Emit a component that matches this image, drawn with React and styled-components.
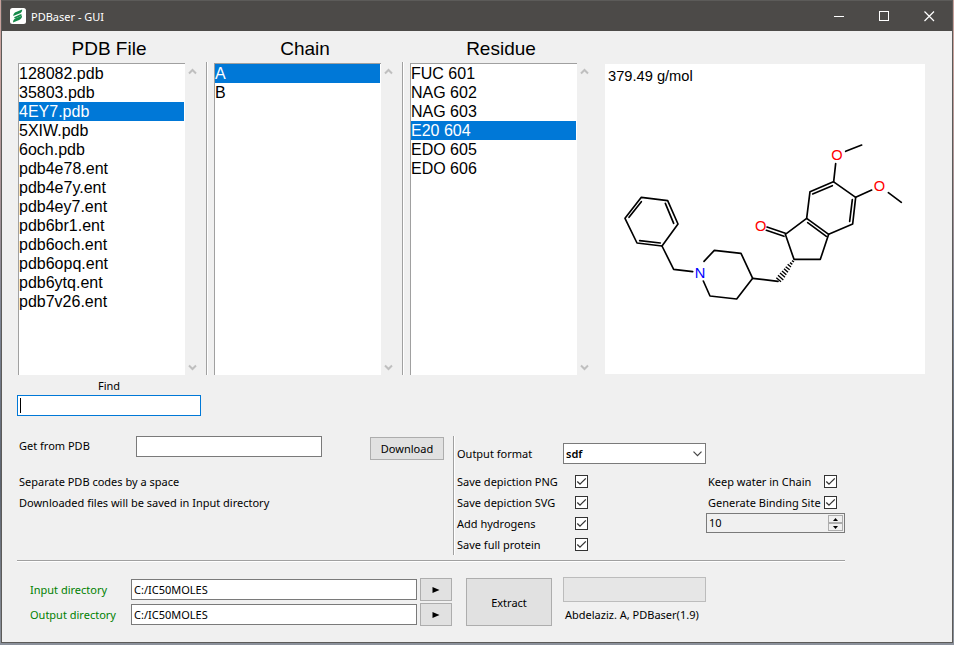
import React, { useState } from "react";
import styled, { createGlobalStyle, css } from "styled-components";

const GlobalStyle = createGlobalStyle`
  * { box-sizing: border-box; }
  body {
    margin: 0;
    color: #000;
    font: 11px/15px "Noto Sans", "Open Sans", sans-serif;
    background: linear-gradient(#c7a19c 0 8%, #a59296 30%, #7c8494 50%, #5d6470 75%, #8b919b);
  }
  button, input, select { font: inherit; color: inherit; margin: 0; border-radius: 0; }
  button { padding: 0; }
`;

const Desktop = styled.div`
  min-height: 100vh;
  padding: 0 1px 2px;
  display: flex;
`;

const Window = styled.main`
  flex: 1;
  min-width: 0;
  border: 1px solid #5c5b59;
  background: #f0f0f0;
`;

const TitleBar = styled.header`
  height: 30px;
  display: flex;
  align-items: center;
  background: #4c4a48;
  color: #fff;
  padding-left: 8px;
`;

const AppTitle = styled.h1`
  flex: 1;
  margin: 0 0 0 5px;
  font-size: 11px;
  font-weight: 400;
`;

const CaptionButton = styled.button`
  width: 45px;
  height: 30px;
  border: 0;
  background: none;
  display: grid;
  place-items: center;
`;

const Panes = styled.section`
  display: grid;
  grid-template-columns: 184fr 12px 184fr 12px 184fr 11px 320fr;
  grid-template-rows: 26px 313px;
  padding: 5px 27px 0 16px;
`;

const PaneTitle = styled.h2`
  grid-row: 1;
  grid-column: ${(p) => p.$col};
  margin: 0;
  padding-right: 2px;
  text-align: center;
  font: 19px/26px "Liberation Sans", Arial, sans-serif;
`;

const ListPane = styled.div`
  grid-row: 2;
  grid-column: ${(p) => p.$col};
  display: flex;
  padding-top: 1px;
`;

const ListBox = styled.ul`
  flex: 1;
  margin: 0;
  padding: 0 1px 0 0;
  list-style: none;
  background: #fff;
  border: solid #a0a0a0;
  border-width: 1px 0 0 1px;
  font: 16px/19px "Liberation Sans", Arial, sans-serif;
`;

const Option = styled.li`
  height: 19px;
  cursor: default;
  white-space: nowrap;
  ${(p) =>
    p.$selected &&
    css`
      background: #0078d7;
      color: #fff;
    `}
`;

const ScrollBar = styled.div`
  width: 17px;
  display: flex;
  flex-direction: column;
  justify-content: space-between;
`;

const ScrollButton = styled.button`
  height: 16px;
  padding-right: 2px;
  border: 0;
  background: none;
  display: grid;
  place-items: center;
`;

const PaneDivider = styled.div`
  grid-row: 2;
  grid-column: ${(p) => p.$col};
  width: 2px;
  margin-left: 4px;
  border-left: 1px solid #a0a0a0;
  background: #fff;
`;

const Depiction = styled.figure`
  grid-row: 2;
  grid-column: 7;
  margin: 2px 0 1px;
  background: #fff;
  svg { display: block; width: 100%; height: 100%; }
`;

const FindArea = styled.section`
  display: flex;
  flex-direction: column;
  width: 184px;
  margin: 3px 0 0 15px;
  label { text-align: center; line-height: 15px; margin-bottom: 2px; }
`;

const TextInput = styled.input`
  height: 21px;
  width: 100%;
  min-width: 0;
  padding: 0 2px;
  border: 1px solid #7a7a7a;
  background: #fff;
  outline: none;
`;

const FindInput = styled(TextInput)`
  border-color: #0078d7;
  caret-color: transparent;
  &:placeholder-shown:focus {
    background: linear-gradient(#000, #000) 2px 2px / 1px 15px no-repeat #fff;
  }
`;

const Lower = styled.section`
  margin: 20px 107px 0 15px;
  display: grid;
  grid-template-columns: 436fr 392fr;
  height: 119px;
`;

const Fetch = styled.div`
  padding: 0 9px 0 2px;
`;

const FetchRow = styled.div`
  display: grid;
  grid-template-columns: 117px 1fr 74px;
  align-items: start;
  height: 38px;
  label { line-height: 20px; }
  input { width: 186px; }
  button { margin-top: 1px; }
`;

const Hint = styled.p`
  margin: 0;
  line-height: 15px;
  padding-bottom: 6px;
`;

const Button = styled.button`
  height: ${(p) => p.$height || 23}px;
  margin-top: ${(p) => p.$top || 0}px;
  border: 1px solid #adadad;
  background: #e1e1e1;
  display: grid;
  place-items: center;
`;

const Options = styled.div`
  border-left: 1px solid #a0a0a0;
  box-shadow: inset 1px 0 #fff;
  padding: 7px 0 0 3px;
`;

const FormatRow = styled.div`
  display: grid;
  grid-template-columns: 106px 143px;
  align-items: center;
  margin-bottom: 7px;
`;

const SelectBox = styled.div`
  display: grid;
  align-items: center;
  > * { grid-area: 1 / 1; }
  svg { justify-self: end; margin-right: 4px; pointer-events: none; }
`;

const Select = styled.select`
  appearance: none;
  height: 21px;
  width: 100%;
  padding: 0 2px;
  border: 1px solid #7a7a7a;
  background: #fff;
  font-weight: 600;
  outline: none;
`;

const CheckColumns = styled.div`
  display: grid;
  grid-template-columns: 249px 139px;
`;

const CheckRow = styled.div`
  display: grid;
  grid-template-columns: ${(p) => p.$label}px 13px;
  align-items: center;
  height: 21px;
  padding-left: ${(p) => p.$indent || 0}px;
  white-space: nowrap;
`;

const CheckBoxFrame = styled.span`
  display: grid;
  width: 13px;
  height: 13px;
  > * { grid-area: 1 / 1; }
  svg { pointer-events: none; }
  input:not(:checked) + svg { visibility: hidden; }
`;

const CheckInput = styled.input`
  appearance: none;
  width: 13px;
  height: 13px;
  border: 1px solid #333;
  background: #fff;
`;

const SpinBox = styled.div`
  display: flex;
  height: 20px;
  border: 1px solid #7a7a7a;
  padding: 1px;
`;

const SpinInput = styled.input`
  flex: 1;
  min-width: 0;
  border: 0;
  padding: 0 1px 2px;
  background: none;
  outline: none;
`;

const SpinButtons = styled.div`
  width: 15px;
  display: grid;
  grid-template-rows: 8px 8px;
`;

const SpinButton = styled.button`
  border: 1px solid #adadad;
  background: #f0f0f0;
  display: grid;
  place-items: center;
`;

const Rule = styled.hr`
  margin: 5px 107px 0 15px;
  border: solid;
  border-width: 1px 0;
  border-color: #a0a0a0 transparent #fff;
`;

const Footer = styled.section`
  margin: 15px 107px 15px 28px;
  display: grid;
  grid-template-columns: 425px 86px 143px;
  column-gap: 11px;
  align-items: start;
`;

const Directories = styled.div`
  display: grid;
  gap: 2px;
  padding-top: 1px;
`;

const DirectoryRow = styled.div`
  display: grid;
  grid-template-columns: 98px 286px 32px;
  column-gap: 3px;
  align-items: center;
  label { color: #008000; }
`;

const Progress = styled.div`
  height: 25px;
  border: 1px solid #bcbcbc;
  background: #e6e6e6;
`;

const Credit = styled.p`
  margin: 5px 0 0 2px;
  white-space: nowrap;
`;

const files = [
  "128082.pdb", "35803.pdb", "4EY7.pdb", "5XIW.pdb", "6och.pdb", "pdb4e78.ent",
  "pdb4e7y.ent", "pdb4ey7.ent", "pdb6br1.ent", "pdb6och.ent", "pdb6opq.ent",
  "pdb6ytq.ent", "pdb7v26.ent",
];
const residues = ["FUC 601", "NAG 602", "NAG 603", "E20 604", "EDO 605", "EDO 606"];

function ScrollArrow({ down }) {
  return (
    <svg width="9" height="7" viewBox="0 0 9 7" fill="none" stroke="#bfbfbf" strokeWidth="2">
      <path d={down ? "M1 1.5 4.5 5 8 1.5" : "M1 5.5 4.5 2 8 5.5"} />
    </svg>
  );
}

function ListColumn({ title, items, initial, col }) {
  const [selected, setSelected] = useState(initial);
  return (
    <>
      <PaneTitle $col={col}>{title}</PaneTitle>
      <ListPane $col={col}>
        <ListBox role="listbox" aria-label={title}>
          {items.map((item) => (
            <Option
              key={item}
              role="option"
              aria-selected={item === selected}
              $selected={item === selected}
              onClick={() => setSelected(item)}
            >
              {item}
            </Option>
          ))}
        </ListBox>
        <ScrollBar>
          <ScrollButton aria-label="Scroll up"><ScrollArrow /></ScrollButton>
          <ScrollButton aria-label="Scroll down"><ScrollArrow down /></ScrollButton>
        </ScrollBar>
      </ListPane>
    </>
  );
}

function Check({ id, label, labelWidth, indent }) {
  return (
    <CheckRow $label={labelWidth} $indent={indent}>
      <label htmlFor={id}>{label}</label>
      <CheckBoxFrame>
        <CheckInput id={id} type="checkbox" defaultChecked />
        <svg width="13" height="13" viewBox="0 0 13 13" fill="none" stroke="#333" strokeWidth="1.3">
          <path d="M2.3 6.5 5 9.2 10.8 3.4" />
        </svg>
      </CheckBoxFrame>
    </CheckRow>
  );
}

function Directory({ id, label }) {
  return (
    <DirectoryRow>
      <label htmlFor={id}>{label}</label>
      <TextInput id={id} defaultValue="C:/IC50MOLES" />
      <Button aria-label={`Browse ${label}`}>
        <svg width="8" height="8" viewBox="0 0 8 8"><path d="M0.5 1 7.5 4 0.5 7z" /></svg>
      </Button>
    </DirectoryRow>
  );
}

function Molecule() {
  return (
    <svg viewBox="15 12 960 930" role="img" aria-label="Structure of E20 604">
      <g fill="none" stroke="#000" strokeWidth="5" strokeLinecap="round" strokeLinejoin="round">
        <path d="M124 412 203 422 234 492 186 558 111 549 75 475z" />
        <path d="M124 425 87 472M196 430 221 490M181 549 119 542" />
        <path d="M186 558 221 628 278 635" />
        <path d="M312 604 343 571 423 580 458 655 410 717 330 708 310 663" />
        <path d="M458 655 534 664" />
        <path d="M582 598 556 523 620 475 686 523 661 598z" />
        <path d="M620 475 630 395 700 365 767 412 758 492 686 523" />
        <path d="M638 402 697 377M757 419 749 484M623 488 679 529" />
        <path d="M556 520 501 501M552 529 499 511" />
        <path d="M701 365 707 311M737 274 785 255M767 412 815 390M865 398 904 427" />
        <path strokeLinecap="butt" strokeWidth="4" d="M576 602 582 606M570 608 577 613M563 613 573 621M557 620 569 629M552 626 564 637M546 633 559 644M540 639 555 652M534 646 550 660M529 653 543 665" />
      </g>
      <g fontFamily="Liberation Sans, Arial, sans-serif" fontSize="44">
        <text x="24" y="63">379.49 g/mol</text>
        <g textAnchor="middle">
          <g fill="#f00">
            <text x="711" y="301">O</text>
            <text x="838" y="393">O</text>
            <text x="482" y="512">O</text>
          </g>
          <text x="300" y="653" fill="#00f">N</text>
        </g>
      </g>
    </svg>
  );
}

export default function App() {
  return (
    <Desktop>
      <GlobalStyle />
      <Window>
        <TitleBar>
          <svg width="16" height="16" viewBox="0 0 16 16">
            <rect width="16" height="16" rx="2.5" fill="#fff" />
            <path fill="#168a4a" d="M3.2 8C3.2 5.600 4.500 4.800 6 4L12.200 1.400C12.400 3.600 11 4.800 9.400 5.500z" />
            <path fill="#168a4a" d="M4 9.200 10.400 6.300 12 6.800 11.200 8 5 10.600z" />
            <path fill="#168a4a" d="M3 14.400C3 12 4.300 11 5.800 10.300L12 7.800C12.200 10 10.800 11.200 9.200 11.900z" />
          </svg>
          <AppTitle>PDBaser - GUI</AppTitle>
          <CaptionButton aria-label="Minimize">
            <svg width="11" height="11"><path d="M0 5.500h10" stroke="#fff" /></svg>
          </CaptionButton>
          <CaptionButton aria-label="Maximize">
            <svg width="11" height="11"><rect x=".5" y=".5" width="9" height="9" fill="none" stroke="#fff" /></svg>
          </CaptionButton>
          <CaptionButton aria-label="Close">
            <svg width="11" height="11"><path d="M.5 .5 10 10M10 .5 .5 10" stroke="#fff" strokeWidth="1.200" /></svg>
          </CaptionButton>
        </TitleBar>

        <Panes>
          <ListColumn title="PDB File" items={files} initial="4EY7.pdb" col={1} />
          <PaneDivider $col={2} />
          <ListColumn title="Chain" items={["A", "B"]} initial="A" col={3} />
          <PaneDivider $col={4} />
          <ListColumn title="Residue" items={residues} initial="E20 604" col={5} />
          <Depiction><Molecule /></Depiction>
        </Panes>

        <FindArea>
          <label htmlFor="find">Find</label>
          <FindInput id="find" placeholder=" " autoFocus />
        </FindArea>

        <Lower>
          <Fetch>
            <FetchRow>
              <label htmlFor="codes">Get from PDB</label>
              <TextInput id="codes" />
              <Button>Download</Button>
            </FetchRow>
            <Hint>Separate PDB codes by a space</Hint>
            <Hint>Downloaded files will be saved in Input directory</Hint>
          </Fetch>
          <Options>
            <FormatRow>
              <label htmlFor="format">Output format</label>
              <SelectBox>
                <Select id="format" defaultValue="sdf">
                  <option>sdf</option>
                  <option>pdb</option>
                </Select>
                <svg width="9" height="6" viewBox="0 0 9 6" fill="none" stroke="#444" strokeWidth="1.200">
                  <path d="M.5 .7 4.500 4.700 8.500 .7" />
                </svg>
              </SelectBox>
            </FormatRow>
            <CheckColumns>
              <div>
                <Check id="png" label="Save depiction PNG" labelWidth={118} />
                <Check id="svg" label="Save depiction SVG" labelWidth={118} />
                <Check id="hydrogens" label="Add hydrogens" labelWidth={118} />
                <Check id="protein" label="Save full protein" labelWidth={118} />
              </div>
              <div>
                <Check id="water" label="Keep water in Chain" labelWidth={116} indent={2} />
                <Check id="site" label="Generate Binding Site" labelWidth={116} indent={2} />
                <SpinBox>
                  <SpinInput aria-label="Binding site distance" defaultValue="10" />
                  <SpinButtons>
                    <SpinButton aria-label="Increase">
                      <svg width="5" height="3"><path d="M2.500 0 5 3H0z" /></svg>
                    </SpinButton>
                    <SpinButton aria-label="Decrease">
                      <svg width="5" height="3"><path d="M0 0h5L2.500 3z" /></svg>
                    </SpinButton>
                  </SpinButtons>
                </SpinBox>
              </div>
            </CheckColumns>
          </Options>
        </Lower>

        <Rule />

        <Footer>
          <Directories>
            <Directory id="input-dir" label="Input directory" />
            <Directory id="output-dir" label="Output directory" />
          </Directories>
          <Button $height={48} $top={1}>Extract</Button>
          <div>
            <Progress role="progressbar" aria-label="Extraction progress" />
            <Credit>Abdelaziz. A, PDBaser(1.9)</Credit>
          </div>
        </Footer>
      </Window>
    </Desktop>
  );
}
